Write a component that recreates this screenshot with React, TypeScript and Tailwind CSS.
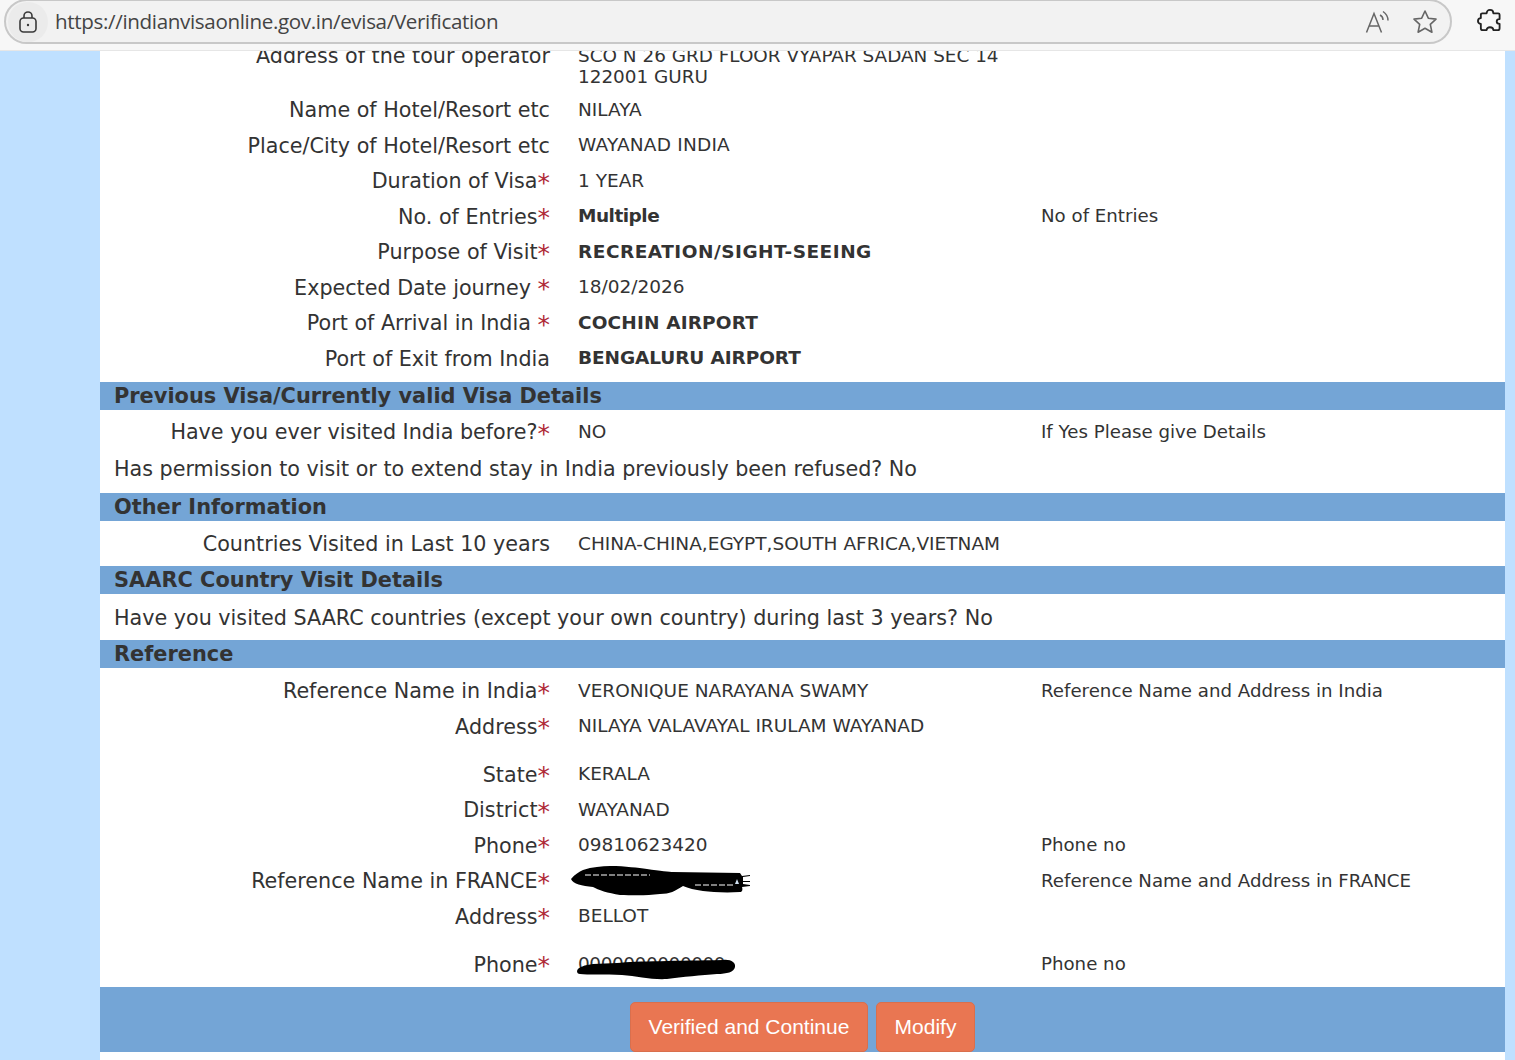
import React from "react";

const Star = () => <span className="inline-block w-[12.5px] text-center text-[#b02a37] text-[25px] leading-none">*</span>;

function Row({ label, req, value, bold, note, tall, gapStar, track }: { label: string; req?: boolean; value?: string; bold?: boolean; note?: string; tall?: boolean; gapStar?: boolean; track?: string }) {
  return (
    <div className={`grid grid-cols-[450px_491px_1fr] ${tall ? "h-[48px]" : "h-[35.5px]"}`}>
      <div className="h-[35.5px] flex items-center justify-end text-[20.7px] whitespace-pre">
        {label}{gapStar ? " " : ""}{req && <Star />}
      </div>
      <div className={`h-[33px] pl-[28px] flex items-center text-[18.5px] whitespace-nowrap ${bold ? "font-bold" : ""} ${track ?? ""}`}>{value}</div>
      <div className="h-[32px] flex items-center text-[18.2px] whitespace-nowrap">{note}</div>
    </div>
  );
}

function Head({ children }: { children: React.ReactNode }) {
  return <div className="h-[28px] bg-[#74a5d6] pl-[14px] flex items-center font-bold text-[20.9px] leading-none whitespace-nowrap">{children}</div>;
}

function Scribble({ d, w, h, className, children }: { d: string; w: number; h: number; className: string; children?: React.ReactNode }) {
  return (
    <svg width={w} height={h} viewBox={`0 0 ${w} ${h}`} className={`absolute ${className}`}>
      <path d={d} fill="#000" />
      {children}
    </svg>
  );
}

export default function App() {
  return (
    <div className="h-[1060px] w-[1515px] overflow-hidden bg-[#bfe0ff] text-[#333] font-['DejaVu_Sans',sans-serif] flex flex-col">
      <header className="h-[51px] shrink-0 bg-[#f7f7f7] border-b border-[#e6e6e6] relative flex items-start">
        <div className="w-[1448px] h-[45px] -mt-[1px] ml-[4px] shrink-0 rounded-[24px] bg-[#f2f2f2] border-2 border-[#c8c8c8] flex items-center">
          <span className="ml-[2px] w-[40px] h-[40px] rounded-full bg-[#ebebeb] flex items-center justify-center shrink-0">
            <svg width="22" height="24" viewBox="0 0 22 24" fill="none" stroke="#3a3a3a" strokeWidth="1.6">
              <rect x="3" y="8" width="16" height="14" rx="3.5" />
              <path d="M7 8V6a4 4 0 0 1 8 0v2" />
              <circle cx="11" cy="15" r="1.2" fill="#3a3a3a" stroke="none" />
            </svg>
          </span>
          <span className="ml-[7px] text-[20.6px] text-[#444] font-['Open_Sans',sans-serif] tracking-[-0.35px] whitespace-nowrap">https://indianvisaonline.gov.in/evisa/Verification</span>
          <div className="ml-auto mr-[12px] flex items-center gap-[21px]">
            <svg width="26" height="24" viewBox="0 0 26 24" fill="none" stroke="#666" strokeWidth="1.5">
              <path d="M1.5 22.5 9 3.500l7.500 19M4.500 16h9" />
              <path d="M15 5c2 1 3 3 3 5M18 1.500c3 2 5 5 5 9" />
            </svg>
            <svg width="26" height="26" viewBox="0 0 26 26" fill="none" stroke="#666" strokeWidth="1.6" strokeLinejoin="round">
              <path d="M13 2l3.300 7.200 7.700.9-5.700 5.300 1.600 7.800L13 19.300l-6.900 3.900 1.600-7.800L2 10.100l7.700-.9z" />
            </svg>
          </div>
        </div>
        <svg className="ml-[25px] mt-[8px]" width="25" height="25" viewBox="0 0 26 26" fill="none" stroke="#222" strokeWidth="1.900" strokeLinejoin="round">
          <path d="M10 5.500c0-2 1.500-3.500 3.500-3.500S17 3.500 17 5.500h5a1.500 1.500 0 0 1 1.500 1.500v4.500c-2 0-3 1-3 2.500s1 2.500 3 2.500v4.500A2 2 0 0 1 21.500 23H17c0-2-1.500-3-3.500-3S10 21 10 23H6a2 2 0 0 1-2-2v-4.500c-2 0-3-1.500-3-3s1-3 3-3V7a1.500 1.500 0 0 1 1.500-1.500z" />
        </svg>
      </header>

      <div className="flex-1 min-h-0 ml-[100px] mr-[10px] bg-white overflow-hidden relative">
        <div className="-mt-[12px] h-[54.25px] grid grid-cols-[450px_491px_1fr]">
          <div className="h-[35.5px] flex items-center justify-end text-[20.7px]">Address of the tour operator</div>
          <div className="pl-[28px] pt-[6px] text-[18.4px] leading-[21px] whitespace-nowrap">SCO N 26 GRD FLOOR VYAPAR SADAN SEC 14<br />122001 GURU</div>
        </div>
        <Row label="Name of Hotel/Resort etc" value="NILAYA" />
        <Row label="Place/City of Hotel/Resort etc" value="WAYANAD INDIA" track="tracking-[0.2px]" />
        <Row label="Duration of Visa" req value="1 YEAR" />
        <Row label="No. of Entries" req value="Multiple" bold track="tracking-[-0.5px]" note="No of Entries" />
        <Row label="Purpose of Visit" req value="RECREATION/SIGHT-SEEING" bold track="tracking-[0.5px]" />
        <Row label="Expected Date journey" req gapStar value="18/02/2026" />
        <Row label="Port of Arrival in India" req gapStar value="COCHIN AIRPORT" bold track="tracking-[0.15px]" />
        <Row label="Port of Exit from India" value="BENGALURU AIRPORT" bold track="tracking-[-0.1px]" />
        <div className="h-[5px]" />

        <Head>Previous Visa/Currently valid Visa Details</Head>
        <div className="h-[83px] pt-[5px]">
          <Row label="Have you ever visited India before?" req value="NO" note="If Yes Please give Details" />
          <div className="h-[38px] pl-[14px] flex items-center text-[20.7px] whitespace-nowrap">Has permission to visit or to extend stay in India previously been refused? No</div>
        </div>

        <Head>Other Information</Head>
        <div className="h-[45px] pt-[6px]">
          <Row label="Countries Visited in Last 10 years" value="CHINA-CHINA,EGYPT,SOUTH AFRICA,VIETNAM" />
        </div>

        <Head>SAARC Country Visit Details</Head>
        <div className="h-[46px] pl-[14px] pt-[2px] flex items-center text-[20.7px] whitespace-nowrap">Have you visited SAARC countries (except your own country) during last 3 years? No</div>

        <Head>Reference</Head>
        <div className="pt-[6px] relative h-[319px]">
          <Row label="Reference Name in India" req value="VERONIQUE NARAYANA SWAMY" note="Reference Name and Address in India" />
          <Row label="Address" req tall value="NILAYA VALAVAYAL IRULAM WAYANAD" />
          <Row label="State" req value="KERALA" />
          <Row label="District" req value="WAYANAD" />
          <Row label="Phone" req value="09810623420" note="Phone no" />
          <Row label="Reference Name in FRANCE" req value="" note="Reference Name and Address in FRANCE" />
          <Row label="Address" req tall value="BELLOT" />
          <Row label="Phone" req value="0000000000000" track="tracking-[-0.45px]" note="Phone no" />
          <Scribble className="left-[470px] top-[198px]" w={181} h={32} d="M1 13C5 8 9 6 13 4C22 1 32 0 40 0C56 0 68 2 77 3C90 5 100 6 103 6L170 7L172 10L180 9L180 10L173 11L173 15L180 15L180 16L173 16L173 18L180 19L180 20L172 21C173 24 172 26 170 26C155 27 142 26 133 25C125 24 118 22 113 20C105 25 100 28 90 28C75 30 60 29 50 29C38 27 28 24 23 21C12 20 3 18 1 13z">
            <path d="M15 9H80M125 19H165" stroke="#fff" strokeWidth="1" strokeDasharray="6 2" />
            <path d="M167 13l2 5h-4z" fill="#cfe0f0" />
          </Scribble>
          <Scribble className="left-[477px] top-[286px]" w={160} h={27} d="M0 17C1 13 8 11 16 10L40 9C60 7 100 7 146 6C154 5 159 9 158 13C157 18 150 20 140 20C125 21 105 23 90 25C75 26 60 22 45 21C28 20 10 21 3 20C1 20 0 19 0 17z" />
        </div>

        <div className="h-[65px] bg-[#74a5d6] flex justify-center items-end gap-[8px] font-['Liberation_Sans',sans-serif] text-[21px] text-white">
          <button className="w-[238px] h-[50px] pb-[2px] rounded-[5px] bg-[#e97652] border border-[#d96f4d]">Verified and Continue</button>
          <button className="w-[99px] h-[50px] pb-[2px] rounded-[5px] bg-[#e97652] border border-[#d96f4d]">Modify</button>
        </div>
      </div>
    </div>
  );
}
